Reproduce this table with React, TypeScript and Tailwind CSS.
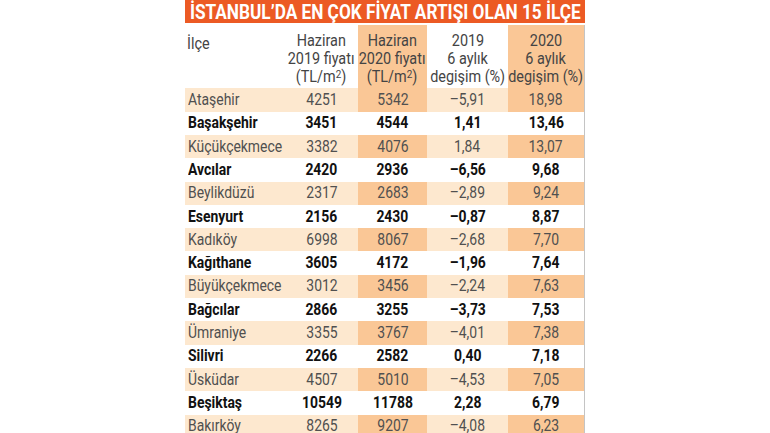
import React from 'react'

type Row = {
  name: string
  p2019: string
  p2020: string
  c2019: string
  c2020: string
}

const rows: Row[] = [
  { name: 'Ataşehir', p2019: '4251', p2020: '5342', c2019: '–5,91', c2020: '18,98' },
  { name: 'Başakşehir', p2019: '3451', p2020: '4544', c2019: '1,41', c2020: '13,46' },
  { name: 'Küçükçekmece', p2019: '3382', p2020: '4076', c2019: '1,84', c2020: '13,07' },
  { name: 'Avcılar', p2019: '2420', p2020: '2936', c2019: '–6,56', c2020: '9,68' },
  { name: 'Beylikdüzü', p2019: '2317', p2020: '2683', c2019: '–2,89', c2020: '9,24' },
  { name: 'Esenyurt', p2019: '2156', p2020: '2430', c2019: '–0,87', c2020: '8,87' },
  { name: 'Kadıköy', p2019: '6998', p2020: '8067', c2019: '–2,68', c2020: '7,70' },
  { name: 'Kağıthane', p2019: '3605', p2020: '4172', c2019: '–1,96', c2020: '7,64' },
  { name: 'Büyükçekmece', p2019: '3012', p2020: '3456', c2019: '–2,24', c2020: '7,63' },
  { name: 'Bağcılar', p2019: '2866', p2020: '3255', c2019: '–3,73', c2020: '7,53' },
  { name: 'Ümraniye', p2019: '3355', p2020: '3767', c2019: '–4,01', c2020: '7,38' },
  { name: 'Silivri', p2019: '2266', p2020: '2582', c2019: '0,40', c2020: '7,18' },
  { name: 'Üsküdar', p2019: '4507', p2020: '5010', c2019: '–4,53', c2020: '7,05' },
  { name: 'Beşiktaş', p2019: '10549', p2020: '11788', c2019: '2,28', c2020: '6,79' },
  { name: 'Bakırköy', p2019: '8265', p2020: '9207', c2019: '–4,08', c2020: '6,23' },
]

const grid = 'grid grid-cols-[100px_73px_69px_81px_76px]'

// tek satir: acik satirlar seftali zemin, kalin satirlar beyaz
function TableRow({ row, light }: { row: Row; light: boolean }) {
  const base = light ? 'bg-[#fde8cf] text-[#505050]' : 'bg-white text-[#111] font-bold'
  const dark = light ? 'bg-[#fac796]' : ''
  return (
    <div className={`${grid} h-[23.3px] text-[16px] leading-none ${base}`}>
      <div className="flex items-center pl-[3px]">
        <span className="inline-block origin-left scale-x-[0.87] whitespace-nowrap">{row.name}</span>
      </div>
      <div className="flex items-center justify-center">
        <span className="inline-block scale-x-[0.87]">{row.p2019}</span>
      </div>
      <div className={`flex items-center justify-center ${dark}`}>
        <span className="inline-block scale-x-[0.87]">{row.p2020}</span>
      </div>
      <div className="flex items-center justify-center">
        <span className="inline-block scale-x-[0.87]">{row.c2019}</span>
      </div>
      <div className={`flex items-center justify-center ${dark}`}>
        <span className="inline-block scale-x-[0.87]">{row.c2020}</span>
      </div>
    </div>
  )
}

function HeadCell({ lines, shaded }: { lines: React.ReactNode[]; shaded?: boolean }) {
  return (
    <div className={`flex flex-col items-center pt-[7px] ${shaded ? 'bg-[#fac796]' : ''}`}>
      {lines.map((l, i) => (
        <span key={i} className="inline-block scale-x-[0.9] whitespace-nowrap leading-[18px]">
          {l}
        </span>
      ))}
    </div>
  )
}

export default function App() {
  const unit = (
    <>
      (TL/m<sup className="text-[11px] -top-[0.35em]">2</sup>)
    </>
  )
  return (
    <div className="h-[433px] w-[770px] overflow-hidden bg-white font-['Roboto',sans-serif]">
      <div className="mx-auto w-[400px]">
        {/* baslik */}
        <div className="flex h-[23px] items-center justify-center overflow-hidden bg-[#ec5a24]">
          <span className="inline-block scale-x-[0.82] whitespace-nowrap pt-[2px] text-[21px] font-bold leading-none text-white">
            İSTANBUL’DA EN ÇOK FİYAT ARTIŞI OLAN 15 İLÇE
          </span>
        </div>

        <div className="mt-[2px] border-r border-[#c4c4c4]">
          {/* sutun basliklari */}
          <div className={`${grid} h-[63.4px] text-[16px] text-[#444]`}>
            <div className="pl-[2px] pt-[7px]">
              <span className="inline-block origin-left scale-x-[0.9] leading-[18px]">İlçe</span>
            </div>
            <HeadCell lines={['Haziran', '2019 fiyatı', unit]} />
            <HeadCell lines={['Haziran', '2020 fiyatı', unit]} shaded />
            <HeadCell lines={['2019', '6 aylık', 'degişim (%)']} />
            <HeadCell lines={['2020', '6 aylık', 'degişim (%)']} shaded />
          </div>

          {rows.map((r, i) => (
            <TableRow key={r.name} row={r} light={i % 2 === 0} />
          ))}
        </div>
      </div>
    </div>
  )
}
